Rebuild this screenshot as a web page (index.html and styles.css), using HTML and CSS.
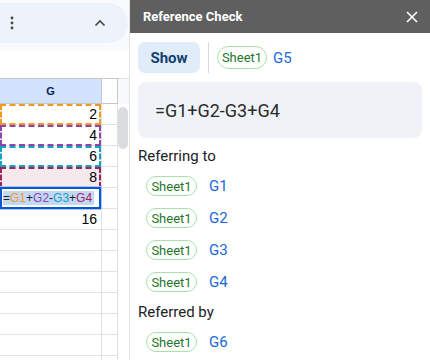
FILE: index.html
```html
<!DOCTYPE html>
<html lang="en">
<head>
    <meta charset="UTF-8">
    <title>Reference Check</title>
    <link rel="stylesheet" href="styles.css">
</head>
<body>

<div class="app">
    <div class="sheet">
        <div class="toolbar-band">
            <div class="toolbar">
                <svg width="4" height="14" viewBox="0 0 4 14"><circle cx="2" cy="2" r="1.4"/><circle cx="2" cy="7" r="1.4"/><circle cx="2" cy="12" r="1.4"/></svg>
                <svg width="12" height="8" viewBox="0 0 12 8"><path d="M1.5 6.5 6 2l4.5 4.5" fill="none" stroke="#444746" stroke-width="1.6"/></svg>
            </div>
        </div>
        <div class="grid-wrap">
            <div class="cells">
                <div class="row head"><div class="c g">G</div><div class="c n"></div></div>
                <div class="row"><div class="c g num ref r1">2</div><div class="c n"></div></div>
                <div class="row"><div class="c g num ref r2">4</div><div class="c n"></div></div>
                <div class="row"><div class="c g num ref r3">6</div><div class="c n"></div></div>
                <div class="row"><div class="c g num ref r4">8</div><div class="c n"></div></div>
                <div class="row"><div class="c g edit"><span class="sel">=<b class="k1">G1</b>+<b class="k2">G2</b>-<b class="k3">G3</b>+<b class="k4">G4</b></span></div><div class="c n"></div></div>
                <div class="row"><div class="c g num">16</div><div class="c n"></div></div>
                <div class="row"><div class="c g"></div><div class="c n"></div></div>
                <div class="row"><div class="c g"></div><div class="c n"></div></div>
                <div class="row"><div class="c g"></div><div class="c n"></div></div>
                <div class="row"><div class="c g"></div><div class="c n"></div></div>
                <div class="row"><div class="c g"></div><div class="c n"></div></div>
                <div class="row"><div class="c g"></div><div class="c n"></div></div>
                <div class="row"><div class="c g"></div><div class="c n"></div></div>
            </div>
            <div class="vscroll">
                <div class="vs-head"></div>
                <div class="thumb"></div>
            </div>
        </div>
    </div>

    <div class="panel">
        <div class="panel-head">
            <span class="title">Reference Check</span>
            <svg width="12" height="12" viewBox="0 0 12 12"><path d="M1 1l10 10M11 1 1 11" stroke="#fff" stroke-width="1.6"/></svg>
        </div>
        <div class="top-row">
            <button class="show">Show</button>
            <div class="sep"></div>
            <span class="chip big">Sheet1</span>
            <span class="cell-ref">G5</span>
        </div>
        <div class="formula">=G1+G2-G3+G4</div>

        <div class="heading">Referring to</div>
        <div class="ref-row"><span class="chip">Sheet1</span><span class="cell-ref">G1</span></div>
        <div class="ref-row"><span class="chip">Sheet1</span><span class="cell-ref">G2</span></div>
        <div class="ref-row"><span class="chip">Sheet1</span><span class="cell-ref">G3</span></div>
        <div class="ref-row"><span class="chip">Sheet1</span><span class="cell-ref">G4</span></div>

        <div class="heading">Referred by</div>
        <div class="ref-row"><span class="chip">Sheet1</span><span class="cell-ref">G6</span></div>
    </div>
</div>

</body>
</html>
```

FILE: styles.css
```css
body {
    margin: 0;
    padding: 0;
    background-color: #ffffff;
    overflow: hidden;
}

.app {
    display: flex;
    width: 430px;
    height: 360px;
}

/* left: spreadsheet */
.sheet {
    width: 129px;
    border-right: 1px solid #e1e3e1;
    font-family: "Liberation Sans", Arial, sans-serif;
    flex-shrink: 0;
}

.toolbar-band {
    height: 50px;
    padding-top: 3px;
    box-sizing: border-box;
    background-color: #f8fafd;
}

.toolbar {
    width: 128px;
    height: 40px;
    box-sizing: border-box;
    padding: 0 22px 0 10px;
    display: flex;
    align-items: center;
    justify-content: space-between;
    background-color: #eef2f9;
    border-radius: 0 20px 20px 0;
}

.toolbar svg circle {
    fill: #444746;
}

.grid-wrap {
    margin-top: 28px;
    display: flex;
}

.cells {
    width: 118px;
}

.row {
    display: flex;
    height: 21px;
    border-bottom: 1px solid #e1e1e1;
    box-sizing: border-box;
}

.row.head {
    height: 26px;
    border-top: 1px solid #c7c7c7;
    border-bottom: 1px solid #c7c7c7;
}

.c {
    box-sizing: border-box;
    border-right: 1px solid #e1e1e1;
}

.c.g {
    width: 102px;
    position: relative;
}

.c.n {
    width: 16px;
}

.head .c {
    border-right-color: #c7c7c7;
}

.head .c.g {
    background-color: #d3e3fd;
    color: #0b1f4d;
    font-size: 11px;
    font-weight: bold;
    text-align: center;
    line-height: 24px;
}

.num {
    text-align: right;
    padding-right: 4px;
    font-size: 14px;
    line-height: 21px;
    color: #000;
}

.ref::after {
    content: "";
    position: absolute;
    left: 0;
    top: 0;
    right: 0;
    bottom: -1px;
    border: 2px dashed;
}

.r1::after { border-color: #f29a1f; }
.r2::after { border-color: #8e44ad; }
.r3::after { border-color: #12a4c0; }
.r4::after { border-color: #a0245a; }

.r4 {
    background-color: #f5e9ee;
}

.edit {
    padding: 2px 0 0 3px;
    font-size: 12px;
    line-height: 16px;
}

.edit::after {
    content: "";
    position: absolute;
    left: 0;
    top: -1px;
    right: 0;
    bottom: -1px;
    border: 2px solid #0b57d0;
    box-shadow: 0 0 0 1px #a8c7fa;
}

.sel {
    background-color: #c3d8f6;
    color: #1f1f1f;
    padding-right: 2px;
}

.sel b { font-weight: normal; }
.k1 { color: #f29a1f; }
.k2 { color: #8e44ad; }
.k3 { color: #12a4c0; }
.k4 { color: #a0245a; }

.vscroll {
    width: 11px;
}

.vs-head {
    height: 26px;
    background-color: #f8f9fa;
    border-top: 1px solid #e1e1e1;
    box-sizing: border-box;
}

.thumb {
    margin: 3px 1px 0 0;
    height: 42px;
    border-radius: 5px;
    background-color: #dadce0;
}

/* right: reference panel */
.panel {
    width: 300px;
    font-family: Roboto, "Liberation Sans", sans-serif;
    color: #1f1f1f;
}

.panel-head {
    height: 33px;
    background-color: #5f5f5f;
    color: white;
    display: flex;
    align-items: center;
    justify-content: space-between;
    padding: 0 12px 0 13px;
}

.title {
    font-size: 13px;
    font-weight: bold;
}

.top-row {
    display: flex;
    align-items: center;
    margin: 9px 8px 0;
    gap: 8px;
}

.show {
    width: 62px;
    height: 31px;
    border: none;
    border-radius: 7px;
    background-color: #e1ecf9;
    color: #123f73;
    font-family: Roboto, sans-serif;
    font-size: 15px;
    font-weight: bold;
    padding: 0;
}

.sep {
    width: 1px;
    height: 31px;
    background-color: #d9d9d9;
}

.chip {
    display: inline-flex;
    align-items: center;
    justify-content: center;
    width: 51px;
    height: 20px;
    box-sizing: border-box;
    border: 1px solid #a8e2a8;
    border-radius: 10px;
    color: #22772a;
    font-size: 13px;
}

.chip.big {
    width: 50px;
    height: 23px;
    border-radius: 12px;
}

.cell-ref {
    color: #1a6ad2;
    font-size: 15px;
}

.top-row .cell-ref {
    margin-left: -2px;
}

.formula {
    margin: 9px 8px 0;
    height: 56px;
    border-radius: 8px;
    background-color: #eff2f7;
    display: flex;
    align-items: center;
    padding-left: 17px;
    font-size: 18px;
    color: #2b2b2b;
}

.heading {
    margin: 4px 8px 0;
    height: 20px;
    line-height: 20px;
    font-size: 15px;
    color: #202124;
}

.formula + .heading {
    margin-top: 8px;
}

.ref-row {
    height: 32px;
    display: flex;
    align-items: center;
    padding-left: 16px;
    gap: 12px;
}

.heading + .ref-row {
    margin-top: 4px;
}
```
